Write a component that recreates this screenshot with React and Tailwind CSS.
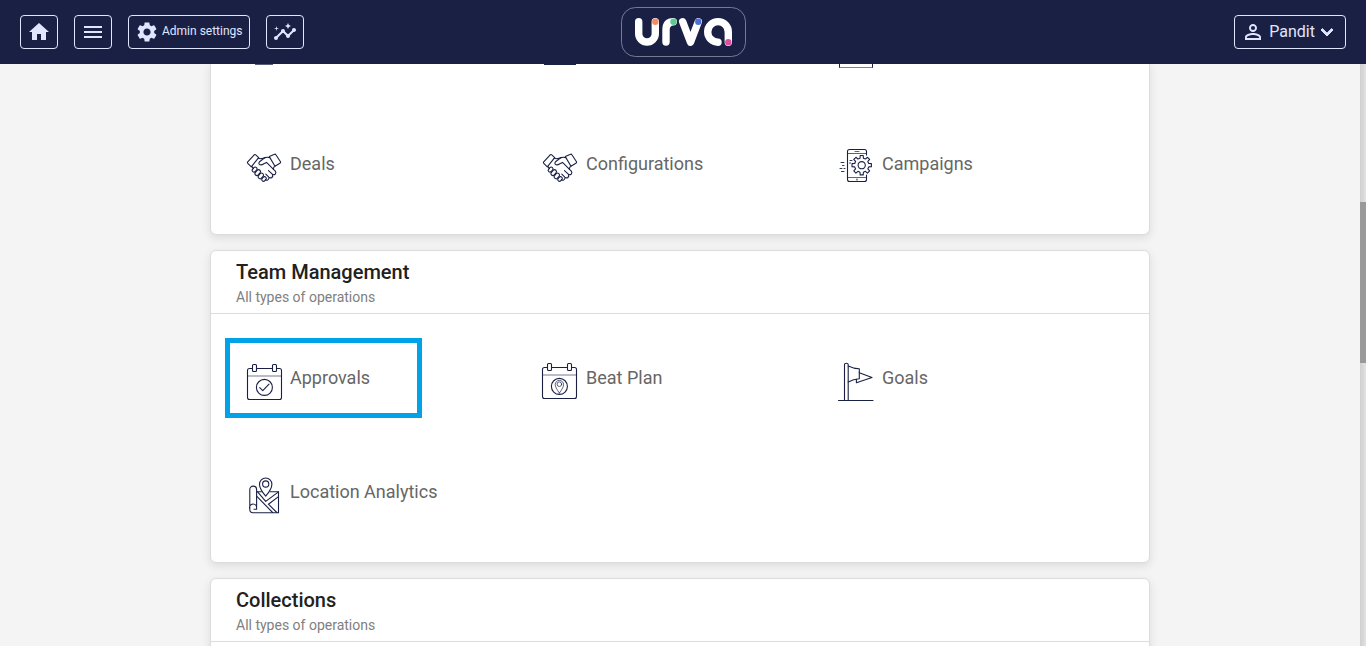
import {
  MdExpandMore,
  MdHome,
  MdInsights,
  MdMenu,
  MdPersonOutline,
  MdSettings,
} from "react-icons/md";

const gearPath = (cx, cy, outer, inner, teeth) => {
  const step = (Math.PI * 2) / teeth;
  const points = [];
  for (let i = 0; i < teeth; i++) {
    const a = i * step - Math.PI / 2;
    [
      [inner, -0.3],
      [outer, -0.2],
      [outer, 0.2],
      [inner, 0.3],
    ].forEach(([r, k]) => {
      points.push(
        `${(cx + r * Math.cos(a + k * step)).toFixed(2)} ${(cy + r * Math.sin(a + k * step)).toFixed(2)}`
      );
    });
  }
  return `M${points.join("L")}Z`;
};

const Icon = ({ children }) => (
  <svg
    className="h-[38px] w-[38px] shrink-0 overflow-visible text-[#1a2044]"
    viewBox="0 0 38 38"
    fill="none"
    stroke="currentColor"
    strokeWidth={1.1}
    strokeLinecap="round"
    strokeLinejoin="round"
    aria-hidden="true"
  >
    {children}
  </svg>
);

const HandshakeIcon = () => (
  <Icon>
    <path d="M1.5 12.2 8.2 4.8Q9 4.2 9.7 4.8L12.7 7.6 5.3 16.8 1.8 13.4Q1.2 12.8 1.5 12.2Z" />
    <path d="M23.3 6.6 28.6 4.2Q29.4 3.9 29.9 4.7L34.5 11.7Q34.9 12.5 34.2 13L29 16.3Z" />
    <path d="M12.2 8.3Q14.5 9.2 17 8.2L19 7.6Q21.5 7 23.6 7.6M5.8 16.4 7.4 18.6" />
    <path d="M19 7.6 13.5 11.8Q12.3 13 13.2 14.2 15 15.8 17.8 13.8L20.5 12.4 29.3 21.2Q30.5 22.8 29.2 24.2 27.8 25.3 26.3 24.2L22.5 20.6" />
    <path d="M28.3 16.4 27.2 19M26.5 24.4Q27.3 26.6 25.6 27.7 24.1 28.3 22.8 27.1L19.8 24.2M23 27.3Q23.2 29.6 21.4 30.2 20.4 30.4 19.4 29.7" />
    <rect x="-1.8" y="-2.7" width="3.6" height="5.4" rx="1.8" transform="translate(8.6 19.6) rotate(42)" />
    <rect x="-1.9" y="-3.2" width="3.8" height="6.4" rx="1.9" transform="translate(11.7 22.6) rotate(42)" />
    <rect x="-1.9" y="-3.1" width="3.8" height="6.2" rx="1.9" transform="translate(14.8 25.9) rotate(42)" />
    <rect x="-1.8" y="-2.5" width="3.6" height="5" rx="1.8" transform="translate(18 29) rotate(42)" />
  </Icon>
);

const CampaignIcon = () => (
  <Icon>
    <path d="M28.5 5V1.5Q28.5-.5 26.5-.5H11.5Q9.5-.5 9.5 1.5V29.5Q9.5 31.5 11.5 31.5H26.5Q28.5 31.5 28.5 29.5V25" />
    <path d="M9.5 3.5H28.5M9.5 27.5H28.5M17 1.5H21" strokeOpacity={0.7} />
    <path d="M19 29V30" />
    <path d={gearPath(23.7, 15.2, 9.8, 7.2, 8)} />
    <circle cx="23.7" cy="15.2" r="3.6" />
    <path
      d="M3 12.5H6M12 10.5H14M4.5 15.5H6M2 18.5H4M6 18.5H7M3.5 21.5H6M11.5 13H12.5"
      strokeWidth={0.9}
    />
  </Icon>
);

const Calendar = ({ children }) => (
  <>
    <path d="M6.5 4.5H3.5Q1.5 4.5 1.5 6.5V33.5Q1.5 35.5 3.5 35.5H33.5Q35.5 35.5 35.5 33.5V6.5Q35.5 4.5 33.5 4.5H30.5M10.5 4.5H26.5" />
    <rect x="6.5" y=".5" width="4" height="7" rx="1" />
    <rect x="26.5" y=".5" width="4" height="7" rx="1" />
    <path d="M1.5 12H35.5" strokeOpacity={0.6} />
    <circle cx="18.4" cy="23.4" r="8" />
    {children}
  </>
);

const ApprovalIcon = () => (
  <Icon>
    <Calendar>
      <path d="M13.7 23.6 16.8 26.6 23 20.2" />
    </Calendar>
  </Icon>
);

const BeatPlanIcon = () => (
  <Icon>
    <g transform="translate(-1 -1)">
      <Calendar>
        <path
          d="M18.4 30Q14.2 24.5 14.2 21.6A4.2 4.2 0 0 1 22.6 21.6Q22.6 24.5 18.4 30Z"
          strokeWidth={0.7}
        />
        <circle cx="18.4" cy="21.2" r="2.3" strokeWidth={0.7} />
      </Calendar>
    </g>
  </Icon>
);

const GoalIcon = () => (
  <Icon>
    <path d="M6.5 36.5V.5Q6.5-.7 8.3-.7 10.2-.7 10.2.5V36.5" />
    <path d="M.5 36.5H35" />
    <path d="M10.2 2Q15.5 4.6 21.3 4.7V14.7Q15.5 15.2 10.2 18" />
    <path d="M21.3 8.7 34 13.6 18.4 18.8V15.2" />
  </Icon>
);

const LocationIcon = () => (
  <Icon>
    <path d="M19.7 18.2Q13.5 10.8 13.5 6.2A6.2 6.2 0 0 1 25.9 6.2Q25.9 10.8 19.7 18.2Z" />
    <circle cx="19.7" cy="6" r="3.1" />
    <path d="M3.8 31.5V11.5A3.4 3.4 0 0 1 10.6 11.5V28.5M3.8 31.5A3.2 3.2 0 0 0 7 34.7H32.5V13.7H24M10.6 13.7H15.4M10.6 28.5A3.4 3.4 0 0 0 3.8 31M10.6 28.5V31.2H8" />
    <path d="M10.6 18.2 26.6 34.5M11.6 13.9 19.7 23.4 32.5 13.9M22.4 26.2 32.5 18.6M22.4 26.2 30.8 34.5" />
  </Icon>
);

const Logo = () => (
  <svg
    className="h-[50px] w-[125px] shrink-0"
    viewBox="0 0 125 50"
    fill="none"
    role="img"
    aria-label="urva"
  >
    <rect x=".5" y=".5" width="124" height="49" rx="14" stroke="#777b90" />
    <g stroke="#fff" strokeWidth={7.4} strokeLinecap="round" strokeLinejoin="round">
      <path d="M17.7 14.7V26.7A8.3 8.3 0 0 0 34.3 26.7V14.7" />
      <path d="M45 35V23Q45 14.7 52.3 14.7" />
      <path d="M61.7 14.7 69.5 35.2 77.3 14.7" />
      <path d="M97 35.2A10.3 10.3 0 1 1 107.3 25V35.2" />
    </g>
    <circle cx="34.3" cy="14.7" r="3.2" fill="#f58b66" />
    <circle cx="52.5" cy="14.7" r="3.2" fill="#5bc795" />
    <circle cx="77.3" cy="14.7" r="3.2" fill="#4c6fe0" />
    <circle cx="107.3" cy="35.2" r="3.2" fill="#dd4fa0" />
  </svg>
);

const NavButton = ({ label, children }) => (
  <button
    aria-label={label}
    className="flex h-[34px] items-center rounded border border-[#e0e6ff] px-[6px]"
  >
    {children}
  </button>
);

const Navbar = () => (
  <header className="flex h-16 shrink-0 items-center px-5 text-[#e0e6ff] bg-[#1a2044]">
    <nav className="flex flex-1 items-center gap-4">
      <NavButton label="Home">
        <MdHome size={24} />
      </NavButton>
      <NavButton label="Menu">
        <MdMenu size={24} />
      </NavButton>
      <NavButton>
        <MdSettings size={24} />
        <span className="ml-[3px] pb-0.5 text-[12px]">Admin settings</span>
      </NavButton>
      <NavButton label="Insights">
        <MdInsights size={24} />
      </NavButton>
    </nav>
    <Logo />
    <div className="flex flex-1 justify-end">
      <NavButton>
        <MdPersonOutline size={24} />
        <span className="ml-1 text-base">Pandit</span>
        <MdExpandMore size={24} className="[&>path:last-child]:stroke-[#e0e6ff] [&>path:last-child]:stroke-1" />
      </NavButton>
    </div>
  </header>
);

const MenuItem = ({ icon: ItemIcon, label, highlighted }) => (
  <div className="relative h-[114px] pt-10 pl-[10px]">
    <a href="#" className="flex items-start gap-[6px]">
      <ItemIcon />
      <span className="text-[18px] leading-7 text-[#666]">{label}</span>
    </a>
    {highlighted && (
      <div className="pointer-events-none absolute top-[14px] -left-[11px] h-20 w-[197px] border-5 border-[#00a2e8]" />
    )}
  </div>
);

const Section = ({ title, items }) => (
  <section className="rounded-md border border-[#dcdcdc] bg-white shadow-[0_3px_10px_rgba(0,0,0,0.1)]">
    <div className="border-b border-[#dcdcdc] px-[25px] pt-[7px] pb-[5px]">
      <h2 className="text-[20px] leading-7 font-medium text-[#212121]">{title}</h2>
      <p className="text-[14px] leading-[22px] text-[#808080]">All types of operations</p>
    </div>
    <div className="grid min-h-[134px] grid-cols-3 px-[25px] py-[10px]">
      {items.map((item) => (
        <MenuItem key={item.label} {...item} />
      ))}
    </div>
  </section>
);

const salesItems = [
  { label: "Deals", icon: HandshakeIcon },
  { label: "Configurations", icon: HandshakeIcon },
  { label: "Campaigns", icon: CampaignIcon },
];

const teamItems = [
  { label: "Approvals", icon: ApprovalIcon, highlighted: true },
  { label: "Beat Plan", icon: BeatPlanIcon },
  { label: "Goals", icon: GoalIcon },
  { label: "Location Analytics", icon: LocationIcon },
];

const App = () => (
  <div className="flex h-screen flex-col overflow-hidden bg-[#f4f4f4] font-['Roboto',sans-serif]">
    <Navbar />
    <div className="flex min-h-0 flex-1">
      <main className="flex-1 overflow-hidden">
        <div className="mx-auto flex max-w-[940px] flex-col gap-[15px]">
          <section className="rounded-b-md border border-t-0 border-[#dcdcdc] bg-white px-[25px] pb-[10px] shadow-[0_3px_10px_rgba(0,0,0,0.1)]">
            {/* bottom edges of the row scrolled under the navbar */}
            <div className="grid h-[46px] grid-cols-3 items-start">
              <div className="ml-[19px] h-px w-[18px] bg-[#5a5e7c]" />
              <div className="ml-[12px] h-px w-8 bg-[#1a2044]" />
              <div className="ml-[11px] h-1 w-[34px] border border-t-0 border-[#1a2044] border-b-[#7b7f99]" />
            </div>
            <div className="grid grid-cols-3">
              {salesItems.map((item) => (
                <MenuItem key={item.label} {...item} />
              ))}
            </div>
          </section>
          <Section title="Team Management" items={teamItems} />
          <Section title="Collections" items={[]} />
        </div>
      </main>
      <div className="w-[6px] bg-linear-to-r from-[#cfcfcf] to-[#e2e2e2]">
        <div className="mt-[138px] h-[161px] bg-[#999]" />
      </div>
    </div>
  </div>
);

export default App;
